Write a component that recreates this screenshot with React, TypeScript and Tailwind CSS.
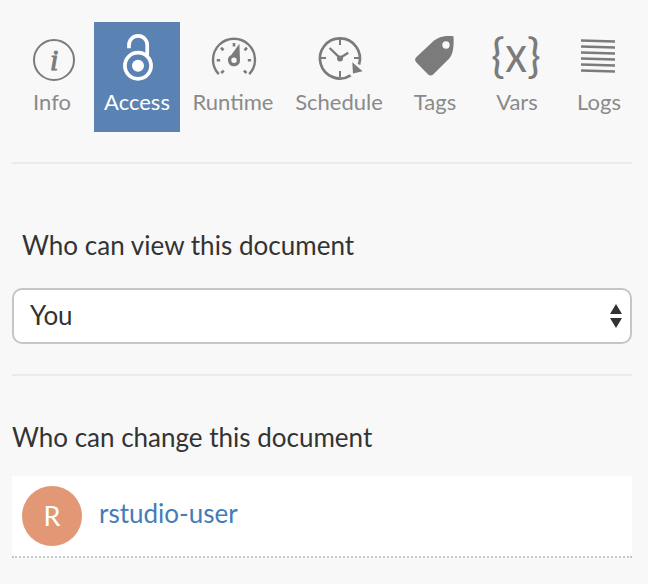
import type { ReactNode } from "react";

function InfoIcon() {
  return (
    <>
      <circle cx="32" cy="38" r="20" fill="none" stroke="currentColor" strokeWidth="2" />
      <text x="32.2" y="47.5" textAnchor="middle" fill="currentColor" stroke="currentColor" strokeWidth="1" className="font-['Liberation_Serif',serif] text-[30px] italic">i</text>
    </>
  );
}

function AccessIcon() {
  return (
    <>
      <g fill="none" stroke="currentColor" strokeWidth="3.7">
        <circle cx="31" cy="43.7" r="13.1" />
        <path d="M22 26.2V22.9a9.1 9.1 0 0 1 18.2 0V35" />
      </g>
      <circle cx="31" cy="43.7" r="6" fill="currentColor" />
    </>
  );
}

function RuntimeIcon() {
  return (
    <>
      <path d="M15.8 52.2A21 21 0 1 1 46.2 52.2" fill="none" stroke="currentColor" strokeWidth="2.4" />
      <path
        d="M13.8 38.3h3.3M31 21v3.4M18 25.8l2.5 2.4M44 25.8l-2.5 2.4M44.8 38.3h3.3M18.2 51l2.6-2.4M43.5 51l-2.6-2.4"
        fill="none"
        stroke="currentColor"
        strokeWidth="2.6"
      />
      <path
        d="M36.4 21.8L37 38.3A6 6 0 1 1 28.2 33Z M33.7 38.3a2.7 2.7 0 1 0-5.4 0a2.7 2.7 0 1 0 5.4 0Z"
        fill="currentColor"
        fillRule="evenodd"
      />
    </>
  );
}

function ScheduleIcon() {
  return (
    <>
      <g fill="none" stroke="currentColor">
        <path d="M41.7 53.3A20 20 0 1 1 50 42.5" strokeWidth="2.7" />
        <path d="M31 17v6M31 49v6M12 36h5M45 36h5" strokeWidth="2" />
        <path d="M20.6 26L31 36L39.2 30.7" strokeWidth="2.4" />
      </g>
      <circle cx="31" cy="36.5" r="3" fill="currentColor" />
      <path d="M43.3 40.2L53.6 49.2L44 51.6Z" fill="currentColor" />
    </>
  );
}

function TagsIcon() {
  return (
    <path
      d="M48.5 14.3C40 13.4 33 14.8 27.7 19.8L11.2 35.3Q9 37.7 11.2 40.2L22.9 52.2Q25.6 54.8 28.4 52.2L44.3 36.4C48.3 32 49 24 48.5 14.3Z M44.7 23a3.7 3.7 0 1 1-7.4 0a3.7 3.7 0 1 1 7.4 0Z"
      fill="currentColor"
      fillRule="evenodd"
    />
  );
}

function VarsIcon() {
  return (
    <g fill="currentColor" textAnchor="middle">
      <text x="11" y="50" className="text-[46px]">{"{"}</text>
      <text transform="translate(29 50) scale(0.87 1)" className="text-[50px]">x</text>
      <text x="47" y="50" className="text-[46px]">{"}"}</text>
    </g>
  );
}

function LogsIcon() {
  return (
    <path
      d="M12 18.5l34 1M12 24.5l34 1M12 30.5l34 1M12 36.5l34 1M12 42.5l34 1M12 48.5l34 1"
      stroke="currentColor"
      strokeWidth="2.4"
    />
  );
}

const tabs: { label: string; width: string; icon: ReactNode; active?: boolean }[] = [
  { label: "Info", width: "w-[84px]", icon: <InfoIcon /> },
  { label: "Access", width: "w-[86px]", icon: <AccessIcon />, active: true },
  { label: "Runtime", width: "w-[106px]", icon: <RuntimeIcon /> },
  { label: "Schedule", width: "w-[106px]", icon: <ScheduleIcon /> },
  { label: "Tags", width: "w-[86px]", icon: <TagsIcon /> },
  { label: "Vars", width: "w-[78px]", icon: <VarsIcon /> },
  { label: "Logs", width: "w-[86px]", icon: <LogsIcon /> },
];

export default function App() {
  return (
    <main className="h-[584px] w-[648px] overflow-hidden bg-[#f8f8f8] pt-[22px] font-[Lato,sans-serif] text-[#333]">
      <nav className="flex pl-2.5">
        {tabs.map((tab) => (
          <button
            key={tab.label}
            className={`flex h-[110px] shrink-0 flex-col items-center ${tab.width} ${tab.active ? "bg-[#5a83b4] text-white" : "text-[#7b7b7b]"}`}
          >
            <svg viewBox="0 0 60 60" className="h-[60px] w-[60px] shrink-0 overflow-visible">{tab.icon}</svg>
            <span className={`mt-1.5 text-[22px] leading-7 ${tab.active ? "text-white" : "text-[#8a8a8a]"}`}>{tab.label}</span>
          </button>
        ))}
      </nav>

      <div className="px-3 pr-4">
        <hr className="mt-[30px] border-t-2 border-[#ebebeb]" />

        <section>
          <h2 className="mt-[65px] ml-2.5 text-[26px] leading-8 tracking-[0.03px]">Who can view this document</h2>
          <button className="mt-[27px] flex h-14 w-full items-center justify-between rounded-[10px] border-2 border-[#c6c6c6] bg-white pr-2 pl-4 text-[26px] leading-8">
            <span className="-mt-0.5">You</span>
            <svg viewBox="0 0 12 24" className="h-6 w-3" fill="#333">
              <path d="M6 0L12 10H0ZM0 14H12L6 24Z" />
            </svg>
          </button>
        </section>

        <hr className="mt-[30px] border-t-2 border-[#ebebeb]" />

        <section>
          <h2 className="mt-[45px] text-[26px] leading-8">Who can change this document</h2>
          <div className="mt-[23px] flex h-[82px] items-center border-b-2 border-dotted border-[#c6c6c6] bg-white pl-2.5">
            <span className="flex h-[60px] w-[60px] items-center justify-center rounded-full bg-[#e29875] text-[27px] text-white">R</span>
            <a className="-mt-1.5 ml-[17px] text-[26px] leading-8 text-[#447cb8]">rstudio-user</a>
          </div>
        </section>
      </div>
    </main>
  );
}
